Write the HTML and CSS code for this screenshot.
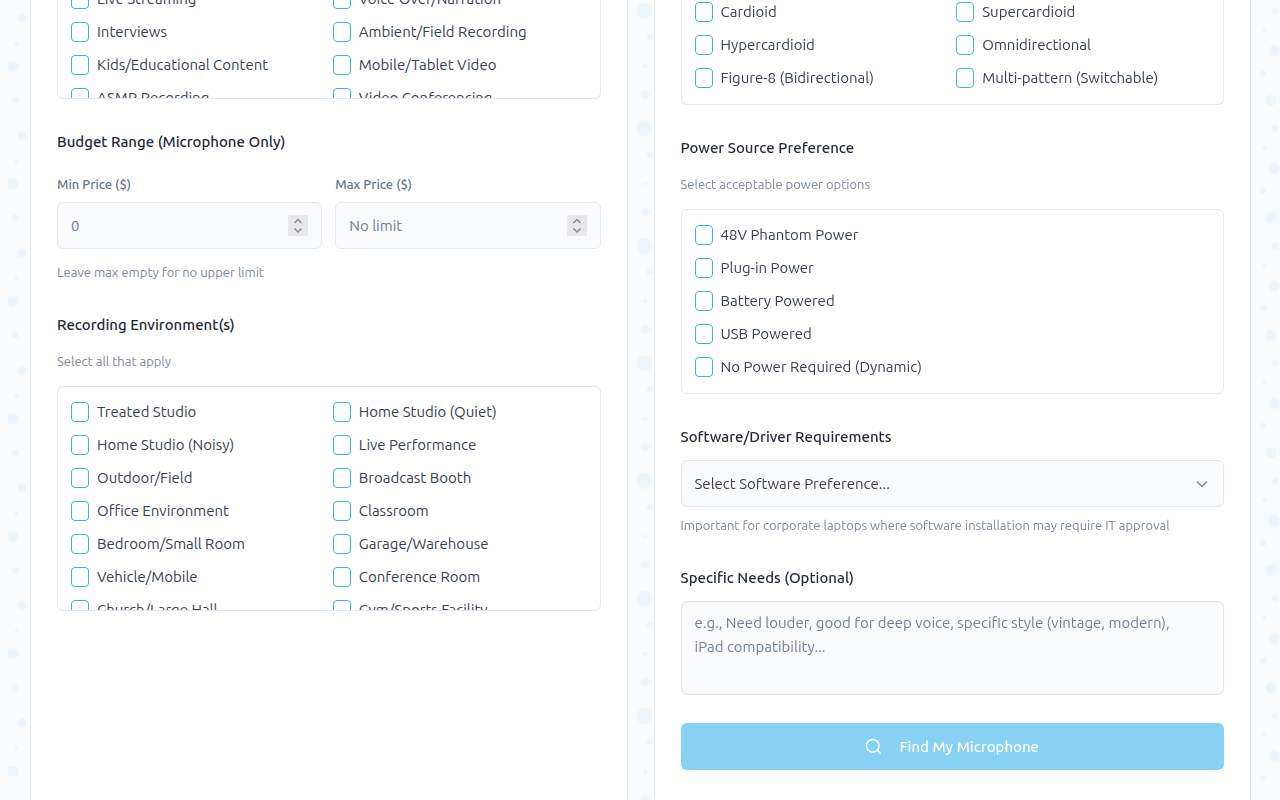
FILE: index.html
```
<!DOCTYPE html>
<html lang="en">
<head>
  <meta charset="utf-8">
  <meta name="viewport" content="width=device-width, initial-scale=1">
  <title>Find My Microphone</title>
  <link rel="stylesheet" href="styles.css">
</head>
<body>
  <!-- Dotted background -->
  <svg class="dots" aria-hidden="true">
    <defs>
      <pattern id="dots-left" width="40" height="117.5" patternUnits="userSpaceOnUse">
        <circle cx="22" cy="18" r="4.5"/>
        <circle cx="16.3" cy="43.8" r="2"/>
        <circle cx="13" cy="66.3" r="5.6"/>
        <circle cx="15.2" cy="100.3" r="3.4"/>
      </pattern>
      <pattern id="dots-middle" width="40" height="117.5" patternUnits="userSpaceOnUse">
        <circle cx="24.2" cy="11" r="7.9"/>
        <circle cx="29.6" cy="37" r="3.3"/>
        <circle cx="25.2" cy="66.3" r="2.1"/>
        <circle cx="25.2" cy="94.5" r="4.5"/>
      </pattern>
      <pattern id="dots-right" width="40" height="117.5" patternUnits="userSpaceOnUse">
        <circle cx="35.2" cy="11" r="3.4"/>
        <circle cx="24.3" cy="29.8" r="2.1"/>
        <circle cx="34.2" cy="51" r="5.6"/>
        <circle cx="23.1" cy="73.3" r="3.3"/>
        <circle cx="30.9" cy="100.3" r="5.6"/>
      </pattern>
    </defs>
    <rect width="40" height="100%" fill="url(#dots-left)"/>
    <svg x="50%" overflow="visible">
      <g transform="translate(-20 0)"><rect width="40" height="100%" fill="url(#dots-middle)"/></g>
    </svg>
    <svg x="100%" overflow="visible">
      <g transform="translate(-40 0)"><rect width="40" height="100%" fill="url(#dots-right)"/></g>
    </svg>
  </svg>

  <form class="finder">
    <section class="card">
      <div class="field">
        <div class="options options-cut options-scrolled" tabindex="0">
          <label class="option"><input type="checkbox"> Live Streaming</label>
          <label class="option"><input type="checkbox"> Voice Over/Narration</label>
          <label class="option"><input type="checkbox"> Interviews</label>
          <label class="option"><input type="checkbox"> Ambient/Field Recording</label>
          <label class="option"><input type="checkbox"> Kids/Educational Content</label>
          <label class="option"><input type="checkbox"> Mobile/Tablet Video</label>
          <label class="option"><input type="checkbox"> ASMR Recording</label>
          <label class="option"><input type="checkbox"> Video Conferencing</label>
        </div>
      </div>

      <div class="field">
        <h3 class="field-title">Budget Range (Microphone Only)</h3>
        <div class="prices">
          <div class="price">
            <label for="min-price">Min Price ($)</label>
            <input class="control" type="number" id="min-price" min="0" placeholder="0">
          </div>
          <div class="price">
            <label for="max-price">Max Price ($)</label>
            <input class="control" type="number" id="max-price" min="0" placeholder="No limit">
          </div>
        </div>
        <p class="hint">Leave max empty for no upper limit</p>
      </div>

      <div class="field">
        <h3 class="field-title">Recording Environment(s)</h3>
        <p class="hint">Select all that apply</p>
        <div class="options options-scroll">
          <label class="option"><input type="checkbox"> Treated Studio</label>
          <label class="option"><input type="checkbox"> Home Studio (Quiet)</label>
          <label class="option"><input type="checkbox"> Home Studio (Noisy)</label>
          <label class="option"><input type="checkbox"> Live Performance</label>
          <label class="option"><input type="checkbox"> Outdoor/Field</label>
          <label class="option"><input type="checkbox"> Broadcast Booth</label>
          <label class="option"><input type="checkbox"> Office Environment</label>
          <label class="option"><input type="checkbox"> Classroom</label>
          <label class="option"><input type="checkbox"> Bedroom/Small Room</label>
          <label class="option"><input type="checkbox"> Garage/Warehouse</label>
          <label class="option"><input type="checkbox"> Vehicle/Mobile</label>
          <label class="option"><input type="checkbox"> Conference Room</label>
          <label class="option"><input type="checkbox"> Church/Large Hall</label>
          <label class="option"><input type="checkbox"> Gym/Sports Facility</label>
        </div>
      </div>
    </section>

    <section class="card">
      <div class="field">
        <div class="options options-cut">
          <label class="option"><input type="checkbox"> Cardioid</label>
          <label class="option"><input type="checkbox"> Supercardioid</label>
          <label class="option"><input type="checkbox"> Hypercardioid</label>
          <label class="option"><input type="checkbox"> Omnidirectional</label>
          <label class="option"><input type="checkbox"> Figure-8 (Bidirectional)</label>
          <label class="option"><input type="checkbox"> Multi-pattern (Switchable)</label>
        </div>
      </div>

      <div class="field">
        <h3 class="field-title">Power Source Preference</h3>
        <p class="hint">Select acceptable power options</p>
        <div class="options options-single">
          <label class="option"><input type="checkbox"> 48V Phantom Power</label>
          <label class="option"><input type="checkbox"> Plug-in Power</label>
          <label class="option"><input type="checkbox"> Battery Powered</label>
          <label class="option"><input type="checkbox"> USB Powered</label>
          <label class="option"><input type="checkbox"> No Power Required (Dynamic)</label>
        </div>
      </div>

      <div class="field field-tight">
        <label class="field-title" for="software">Software/Driver Requirements</label>
        <select class="control" id="software">
          <option>Select Software Preference...</option>
        </select>
        <p class="hint">Important for corporate laptops where software installation may require IT approval</p>
      </div>

      <div class="field field-tight">
        <label class="field-title" for="needs">Specific Needs (Optional)</label>
        <textarea class="control" id="needs" placeholder="e.g., Need louder, good for deep voice, specific style (vintage, modern), iPad compatibility..."></textarea>
      </div>

      <button class="submit" type="submit" disabled>
        <svg width="17" height="17" viewBox="0 0 24 24" fill="none" stroke="currentColor" stroke-width="2" stroke-linecap="round" stroke-linejoin="round" aria-hidden="true">
          <circle cx="11" cy="11" r="9"/>
          <path d="M21.5 21.5l-4.2-4.2"/>
        </svg>
        Find My Microphone
      </button>
    </section>
  </form>
</body>
</html>
```
FILE: styles.css
```
* {
  box-sizing: border-box;
}

body {
  margin: 0;
  background-color: #f9fafc;
  color: #374151;
  font-family: Ubuntu, "Noto Sans", sans-serif;
  font-size: 15px;
  line-height: 24px;
}

.dots {
  position: fixed;
  top: 0;
  left: 0;
  width: 100%;
  height: 100%;
  z-index: -1;
}

.dots circle {
  fill: #edf5fc;
}

.finder {
  display: grid;
  grid-template-columns: 1fr 1fr;
  gap: 26px;
  min-height: 100vh;
  padding: 0 29px 0 30px;
}

.card {
  min-width: 0;
  padding: 0 26px 26px;
  background-color: #ffffff;
  border: solid #e2e8f0;
  border-width: 0 1px;
}

.field {
  margin-bottom: 31px;
}

.field-title {
  display: block;
  margin: 0 0 14px;
  color: #1f2937;
  font-size: 15px;
  font-weight: 500;
}

.field-tight .field-title {
  margin-bottom: 11px;
}

.hint {
  margin: 0 0 15px;
  color: #7b899d;
  font-size: 13px;
  line-height: 20px;
}

.control + .hint {
  margin-top: 8px;
}

/* Checkbox lists */
.options {
  display: grid;
  grid-template-columns: 1fr 1fr;
  gap: 8px;
  padding: 12px 13px 14px;
  border: 1px solid #e2e8f0;
  border-radius: 6px;
}

.options-single {
  grid-template-columns: 1fr;
}

.options-scroll {
  height: 225px;
  overflow-y: auto;
  scrollbar-width: none;
}

.options-cut {
  margin-top: -1px;
  padding-top: 0;
  border-top: none;
  border-radius: 0 0 6px 6px;
}

/* list continues above the top edge of the page */
.options-scrolled {
  height: 113px;
  margin-top: -14px;
  padding-bottom: 0;
  overflow: hidden;
}

.option {
  display: flex;
  align-items: center;
  gap: 8px;
  height: 25px;
  white-space: nowrap;
}

.option input {
  appearance: none;
  flex: none;
  width: 18px;
  height: 20px;
  margin: 0;
  background-color: #ffffff;
  border: 1px solid #38b2ec;
  border-radius: 4px;
}

.option input:checked {
  background-color: #0ea5e9;
}

/* Inputs */
.control {
  display: block;
  width: 100%;
  height: 47px;
  padding: 0 13px;
  background-color: #f8fafc;
  border: 1px solid #e2e8f0;
  border-radius: 6px;
  color: #374151;
  font: inherit;
}

.control::placeholder {
  color: #718096;
  opacity: 1;
}

.prices {
  display: grid;
  grid-template-columns: 1fr 1fr;
  gap: 13px;
  margin: 20px 0 13px;
}

.price label {
  display: block;
  margin-bottom: 7px;
  color: #64748b;
  font-size: 13px;
  font-weight: 500;
  line-height: 21px;
}

input[type="number"]::-webkit-inner-spin-button {
  appearance: none;
  width: 20px;
  height: 21px;
  margin: 0;
  opacity: 1;
  background: #e8e7ec url("data:image/svg+xml,%3Csvg xmlns='http://www.w3.org/2000/svg' width='20' height='21' fill='none' stroke='%238b8b95' stroke-width='1.5'%3E%3Cpath d='M6.5 8L10 4.5L13.5 8M6.5 13.5L10 17L13.5 13.5'/%3E%3C/svg%3E") no-repeat;
}

select.control {
  appearance: none;
  background-image: url("data:image/svg+xml,%3Csvg xmlns='http://www.w3.org/2000/svg' width='12' height='8' fill='none' stroke='%238a9099' stroke-width='1.5'%3E%3Cpath d='M1 1.5L6 6.5L11 1.5'/%3E%3C/svg%3E");
  background-repeat: no-repeat;
  background-position: right 15px center;
}

textarea.control {
  height: 94px;
  padding: 9px 26px 9px 13px;
  resize: none;
}

.submit {
  display: flex;
  align-items: center;
  justify-content: center;
  gap: 17px;
  width: 100%;
  height: 47px;
  margin-top: -3px;
  background-color: #87d1f4;
  border: none;
  border-radius: 6px;
  color: #ffffff;
  font: inherit;
  font-weight: 500;
}

@media (max-width: 760px) {
  .finder {
    grid-template-columns: 1fr;
  }
}
```
